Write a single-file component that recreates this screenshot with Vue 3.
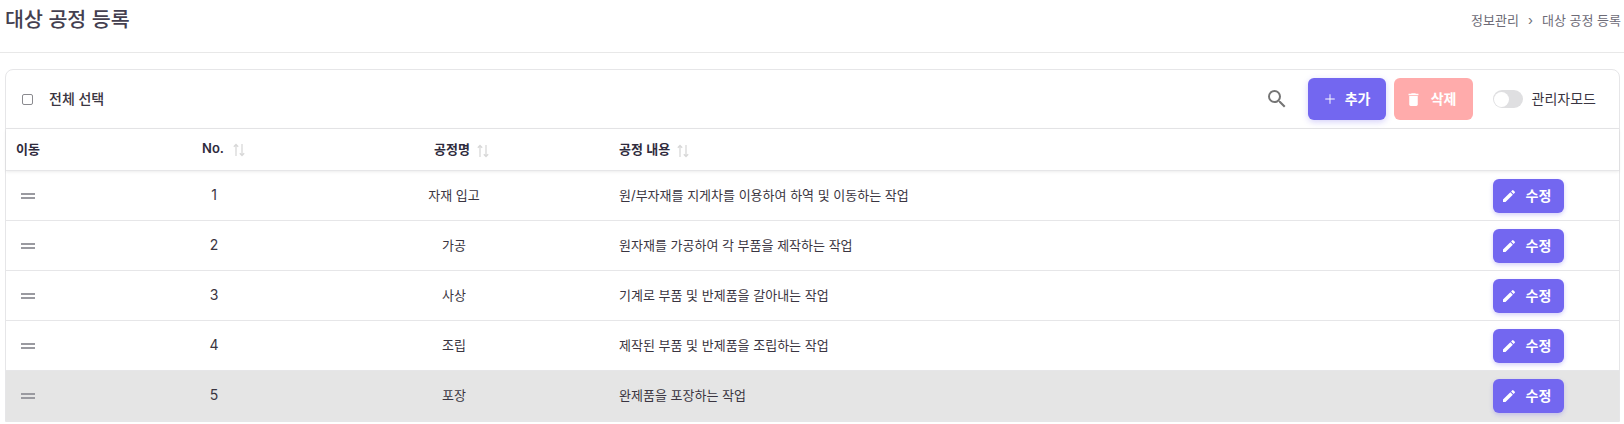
<template>
  <div class="page">
    <header class="page-head">
      <h1 class="title">대상 공정 등록</h1>
      <nav class="crumbs">
        <span>정보관리</span>
        <span class="crumb-sep">›</span>
        <span>대상 공정 등록</span>
      </nav>
    </header>

    <section class="card">
      <div class="toolbar">
        <label class="select-all">
          <input type="checkbox" class="check" />
          <span class="lift">전체 선택</span>
        </label>
        <div class="tools">
          <svg class="search" viewBox="0 0 24 24" width="24" height="24">
            <path fill="#757575" d="M15.5 14h-.79l-.28-.27A6.47 6.47 0 0 0 16 9.5 6.5 6.5 0 1 0 9.5 16c1.61 0 3.09-.59 4.23-1.57l.27.28v.79l5 4.99L20.49 19l-4.99-5zm-6 0C7.01 14 5 11.99 5 9.5S7.01 5 9.5 5 14 7.01 14 9.5 11.99 14 9.5 14z" />
          </svg>
          <button class="btn btn-add">
            <svg viewBox="0 0 24 24" width="14" height="14"><path fill="#fff" d="M12 3.5a.8.8 0 0 1 .8.8v6.9h6.9a.8.8 0 0 1 0 1.6h-6.9v6.900a.8.8 0 0 1-1.6 0v-6.900H4.3a.8.8 0 0 1 0-1.6h6.9V4.3a.8.8 0 0 1 .8-.8z" /></svg>
            <span class="lift">추가</span>
          </button>
          <button class="btn btn-del">
            <svg viewBox="0 0 24 24" width="17" height="17"><path fill="#fff" d="M6 19c0 1.100.9 2 2 2h8c1.100 0 2-.9 2-2V7H6v12zM19 4h-3.500l-1-1h-5l-1 1H5v2h14V4z" /></svg>
            <span class="lift">삭제</span>
          </button>
          <div class="admin">
            <span class="toggle"><span class="knob"></span></span>
            <span class="lift">관리자모드</span>
          </div>
        </div>
      </div>

      <div class="row head">
        <div class="cell move">이동</div>
        <div class="cell center"><span class="sortable">No.<svg class="sort sort-no" viewBox="0 0 14 14" width="14" height="14"><path d="M4 13V1.500M1.800 3.800 4 1.500l2.200 2.300M10 1v11.500M7.800 10.200 10 12.500l2.200-2.300" fill="none" stroke="#d8d8d8" stroke-width="1.300" /></svg></span></div>
        <div class="cell center"><span class="sortable">공정명<svg class="sort" viewBox="0 0 14 14" width="14" height="14"><path d="M4 13V1.500M1.800 3.800 4 1.500l2.200 2.300M10 1v11.500M7.800 10.200 10 12.500l2.200-2.300" fill="none" stroke="#d8d8d8" stroke-width="1.300" /></svg></span></div>
        <div class="cell desc"><span class="sortable">공정 내용<svg class="sort" viewBox="0 0 14 14" width="14" height="14"><path d="M4 13V1.500M1.800 3.800 4 1.500l2.200 2.300M10 1v11.500M7.800 10.200 10 12.500l2.200-2.300" fill="none" stroke="#d8d8d8" stroke-width="1.300" /></svg></span></div>
        <div class="cell"></div>
      </div>

      <div v-for="item in processes" :key="item.no" class="row body" :class="{ dragging: item.no === 5 }">
        <div class="cell move"><span class="handle"></span></div>
        <div class="cell center num">{{ item.no }}</div>
        <div class="cell center">{{ item.name }}</div>
        <div class="cell desc">{{ item.text }}</div>
        <div class="cell action">
          <button class="btn btn-edit">
            <svg viewBox="0 0 24 24" width="16" height="16"><path fill="#fff" d="M3 17.250V21h3.750L17.810 9.940l-3.750-3.750L3 17.250zM20.710 7.040a1 1 0 0 0 0-1.410l-2.340-2.340a1 1 0 0 0-1.410 0l-1.830 1.830 3.750 3.750 1.830-1.830z" /></svg>
            <span class="lift">수정</span>
          </button>
        </div>
      </div>
    </section>
  </div>
</template>

<script setup>
const processes = [
  { no: 1, name: '자재 입고', text: '원/부자재를 지게차를 이용하여 하역 및 이동하는 작업' },
  { no: 2, name: '가공', text: '원자재를 가공하여 각 부품을 제작하는 작업' },
  { no: 3, name: '사상', text: '기계로 부품 및 반제품을 갈아내는 작업' },
  { no: 4, name: '조립', text: '제작된 부품 및 반제품을 조립하는 작업' },
  { no: 5, name: '포장', text: '완제품을 포장하는 작업' }
]
</script>

<style>
html, body {
  background: #fff;
  overflow: hidden;
}
</style>

<style scoped>
.page {
  height: 424px;
  overflow: hidden;
  font-family: Inter, "Noto Sans CJK KR", sans-serif;
  color: #3a3541;
  font-size: 13px;
}

.page-head {
  display: flex;
  justify-content: space-between;
  height: 53px;
  padding: 0 3px 0 5px;
  border-bottom: 1px solid #e8e8e8;
  box-sizing: border-box;
}

.title {
  margin: 5px 0 0;
  font-size: 20.600px;
  line-height: 30px;
  font-weight: 500;
  color: #444050;
}

.crumbs {
  display: flex;
  gap: 9px;
  margin-top: 11px;
  line-height: 18px;
  color: #6d6b77;
}

.card {
  margin: 16px 4px 0 5px;
  border: 1px solid #e6e6e8;
  border-radius: 8px 8px 0 0;
}

.toolbar {
  display: flex;
  align-items: center;
  justify-content: space-between;
  height: 58px;
  padding-right: 23px;
  padding-left: 16px;
  border-bottom: 1px solid #e6e6e8;
}

.select-all {
  display: flex;
  align-items: center;
  gap: 16px;
  font-size: 14px;
  font-weight: 500;
}

.lift {
  margin-bottom: 2px;
}

.check {
  width: 11px;
  height: 11px;
  margin: 0;
  appearance: none;
  border: 1px solid #8a8a8f;
  border-radius: 2px;
  background: #fff;
}

.tools {
  display: flex;
  align-items: center;
}

.search {
  margin-right: 19px;
}

.btn {
  display: inline-flex;
  align-items: center;
  justify-content: center;
  border: 0;
  border-radius: 6px;
  color: #fff;
  font-family: inherit;
  font-size: 14px;
  font-weight: 600;
}

.btn-add {
  gap: 8px;
  width: 78px;
  height: 42px;
  padding: 0;
  background: #7367f0;
  box-shadow: 0 2px 6px rgba(115, 103, 240, 0.3);
}

.btn-del {
  gap: 9px;
  width: 79px;
  height: 42px;
  margin-left: 8px;
  padding: 0 5px 0 0;
  background: #ffabab;
}

.admin {
  display: flex;
  align-items: center;
  gap: 9px;
  margin-left: 20px;
  font-size: 14px;
}

.toggle {
  position: relative;
  display: block;
  width: 30px;
  height: 18px;
  border-radius: 9px;
  background: #dfdfe1;
}

.knob {
  position: absolute;
  top: 1.500px;
  left: 1.500px;
  width: 15px;
  height: 15px;
  border-radius: 50%;
  background: #fff;
}

.row {
  display: grid;
  grid-template-columns: 118px 182px 296px 877px 1fr;
  align-items: center;
}

.head {
  position: relative;
  height: 42px;
  padding-bottom: 3px;
  border-bottom: 1px solid #e6e6e8;
  box-sizing: border-box;
  font-weight: 600;
  color: #2f2b3d;
  box-shadow: 0 1px 3px rgba(0, 0, 0, 0.08);
}

.head .center {
  padding-right: 4px;
}

.body {
  height: 50px;
  border-bottom: 1px solid #e6e6e8;
  box-sizing: border-box;
}

.body .center,
.body .desc {
  padding-bottom: 2px;
}

.dragging {
  background: #e5e5e5;
}

.move {
  padding-left: 10px;
}

.center {
  text-align: center;
}

.num {
  padding-right: 2px;
  font-size: 14px;
}

.desc {
  padding-left: 17px;
}

.sortable {
  position: relative;
}

.sort {
  position: absolute;
  top: 3px;
  left: calc(100% + 6px);
}

.sort-no {
  left: calc(100% + 8px);
}

.handle {
  display: block;
  width: 14px;
  height: 0;
  margin-left: 5px;
  padding: 1px 0;
  border-top: 2px solid #9a9aa0;
  border-bottom: 2px solid #9a9aa0;
}

.action {
  padding-left: 14px;
}

.btn-edit {
  gap: 9px;
  width: 71px;
  height: 34px;
  padding: 0 5px 0 0;
  background: #7367f0;
  box-shadow: 0 2px 4px rgba(115, 103, 240, 0.3);
}
</style>
